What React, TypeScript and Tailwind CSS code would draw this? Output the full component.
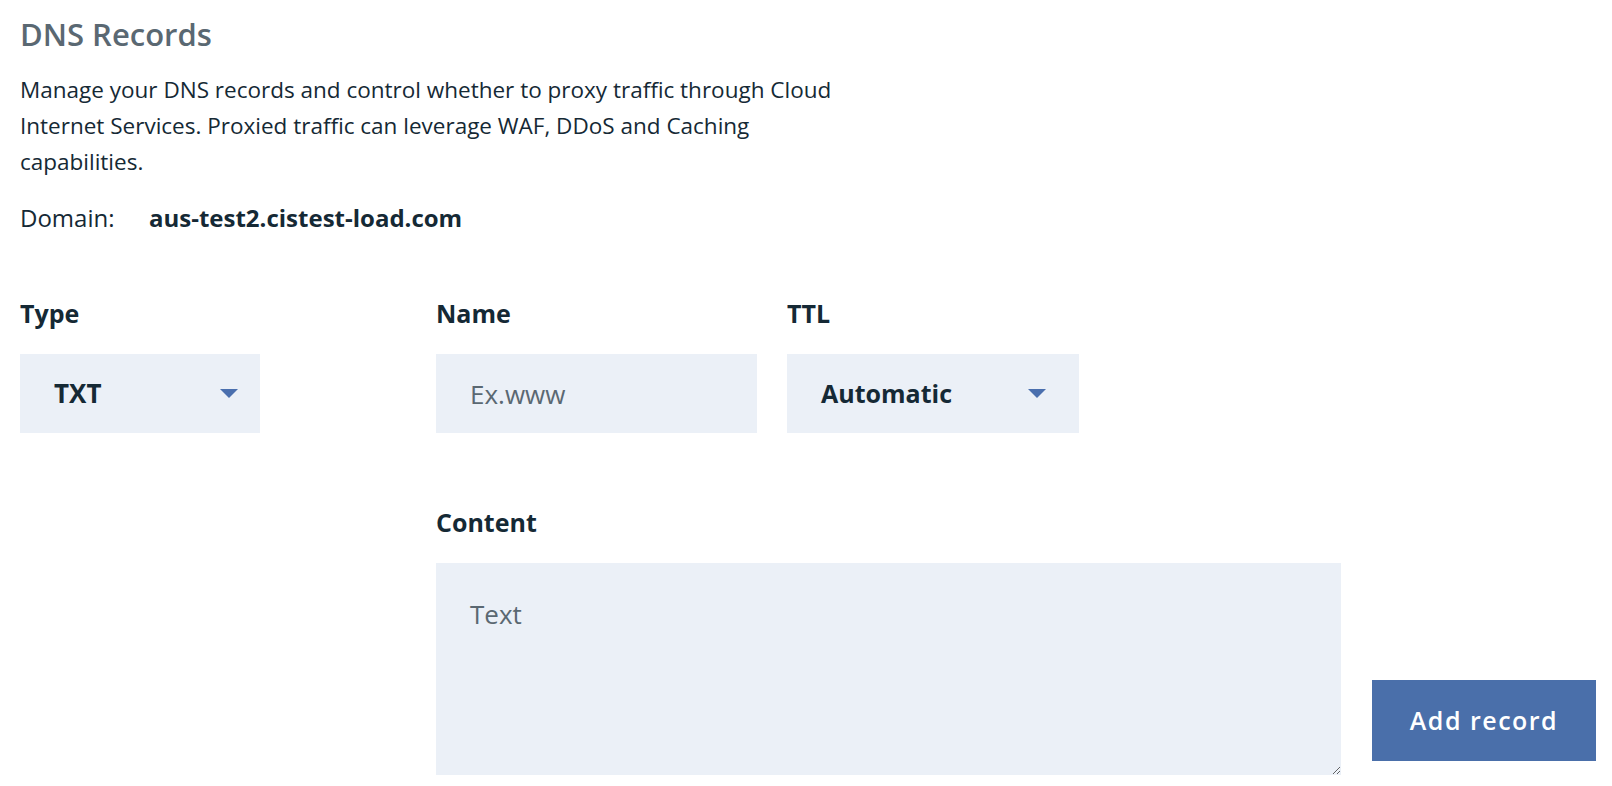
function Caret() {
  return (
    <svg width="18" height="9" viewBox="0 0 18 9" className="shrink-0">
      <path d="M0 0h18L9 9z" fill="#4a6fae" />
    </svg>
  );
}

export default function App() {
  return (
    <div className="min-h-screen bg-white pl-5 pt-4 font-['Open_Sans',Arial,sans-serif] text-[#152935]">
      {/* Header */}
      <h1 className="text-[31px] font-semibold leading-[36px] text-[#5a6872]">DNS Records</h1>
      <p className="mt-[20px] w-[830px] text-[22.5px] leading-[36px] text-[#152935]">
        Manage your DNS records and control whether to proxy traffic through Cloud Internet Services. Proxied
        traffic can leverage WAF, DDoS and Caching capabilities.
      </p>
      <div className="mt-[20px] flex items-center text-[24px] leading-[36px]">
        <span className="w-[129px]">Domain:</span>
        <span className="font-bold">aus-test2.cistest-load.com</span>
      </div>

      {/* Row 1 */}
      <div className="mt-[62px] flex">
        <div className="w-[416px]">
          <label className="block text-[25px] font-bold leading-[30px]">Type</label>
          <div className="mt-[26px] flex h-[79px] w-[240px] items-center justify-between bg-[#ebf0f7] pl-[34px] pr-[22px]">
            <span className="text-[26px] font-bold">TXT</span>
            <Caret />
          </div>
        </div>
        <div className="w-[351px]">
          <label className="block text-[25px] font-bold leading-[30px]">Name</label>
          <input
            placeholder="Ex.www"
            className="mt-[26px] h-[79px] w-[321px] bg-[#ebf0f7] px-[34px] text-[26px] text-[#152935] outline-none placeholder:text-[#5a6872]"
          />
        </div>
        <div>
          <label className="block text-[25px] font-bold leading-[30px]">TTL</label>
          <div className="mt-[26px] flex h-[79px] w-[292px] items-center justify-between bg-[#ebf0f7] pl-[34px] pr-[33px]">
            <span className="text-[25px] font-bold">Automatic</span>
            <Caret />
          </div>
        </div>
      </div>

      {/* Row 2 */}
      <div className="mt-[74px] flex items-end pl-[416px]">
        <div className="w-[905px]">
          <label className="block text-[25px] font-bold leading-[30px]">Content</label>
          <textarea
            placeholder="Text"
            className="mt-[26px] block h-[212px] w-[905px] bg-[#ebf0f7] px-[34px] pt-[32px] text-[26px] outline-none placeholder:text-[#5a6872]"
          />
        </div>
        <button className="mb-[14px] ml-[31px] h-[81px] w-[224px] bg-[#4a6faa] text-[25px] font-semibold tracking-[1.5px] text-white">
          Add record
        </button>
      </div>
    </div>
  );
}
